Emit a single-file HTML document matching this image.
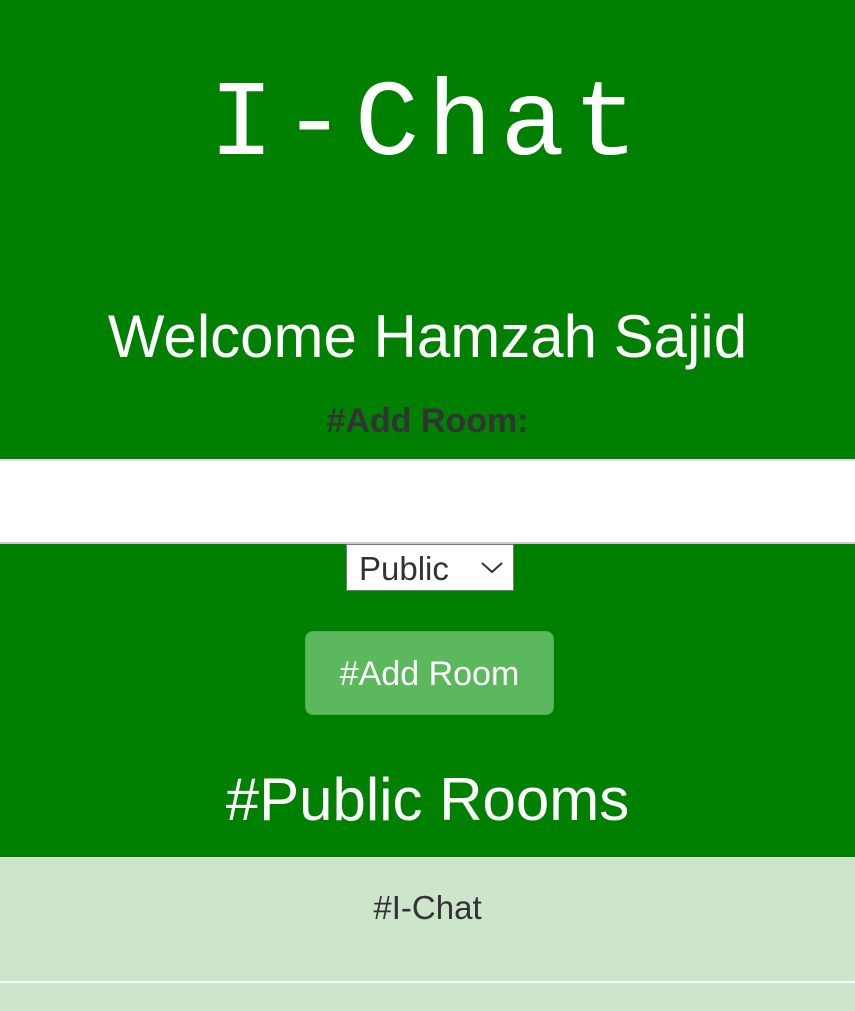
<!DOCTYPE html>
<html><head><style>
body{margin:0;width:855px;height:1011px;overflow:hidden;font-family:"Liberation Sans",sans-serif;background:#cde5cb}
.g{position:absolute;left:0;top:0;width:855px;height:857px;background:#008000}
.t{position:absolute;left:0;width:855px;text-align:center;white-space:nowrap}
</style></head><body>
<div class="g"></div>
<div class="t" style="top:66px;font-family:'Liberation Mono',monospace;font-size:108px;line-height:120px;color:#fff;letter-spacing:8px;padding-left:0;box-sizing:border-box">I-Chat</div>
<div class="t" style="top:302px;font-size:60px;line-height:70px;color:#fff">Welcome Hamzah Sajid</div>
<div class="t" style="top:401px;font-size:34px;line-height:40px;color:#333;font-weight:bold">#Add Room:</div>
<div style="position:absolute;left:0;top:459px;width:855px;height:81px;background:#fff;border-top:2px solid #ddd;border-bottom:2px solid #ccc"></div>
<div style="position:absolute;left:346px;top:544px;width:166px;height:45px;background:#fff;border:1px solid #777;box-sizing:content-box">
<span style="position:absolute;left:12px;top:5px;font-size:33px;color:#333">Public</span>
<svg style="position:absolute;left:134px;top:17px" width="22" height="12"><path d="M1 1L11 10L21 1" stroke="#333" stroke-width="2" fill="none"/></svg>
</div>
<div style="position:absolute;left:305px;top:631px;width:249px;height:84px;background:#5cb85c;border:1px solid #4cae4c;border-radius:8px;box-sizing:border-box;color:#fff;font-size:34px;line-height:84px;text-align:center">#Add Room</div>
<div class="t" style="top:765px;font-size:60px;line-height:70px;color:#fff">#Public Rooms</div>
<div class="t" style="top:888px;font-size:33px;line-height:40px;color:#333">#I-Chat</div>
<div style="position:absolute;left:0;top:981px;width:855px;height:2px;background:#fff"></div>
</body></html>
